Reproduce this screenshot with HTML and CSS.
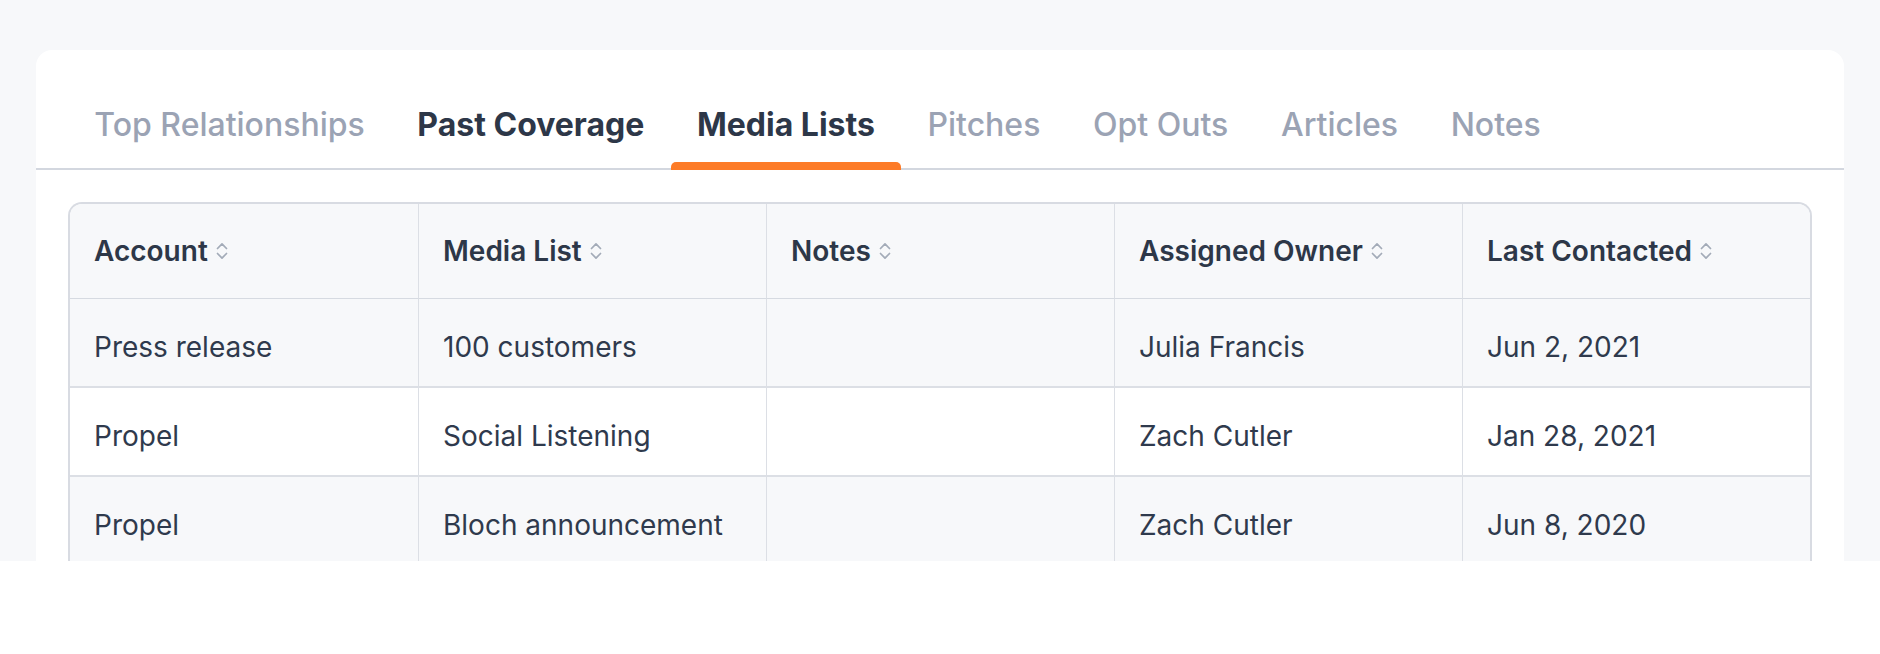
FILE: index.html
```html
<!DOCTYPE html>
<html lang="en">
<head>
<meta charset="utf-8">
<title>Media Lists</title>
<link rel="stylesheet" href="styles.css">
</head>
<body>
<div class="page">
  <div class="card">
    <nav class="tabs">
      <span class="tab">Top Relationships</span>
      <span class="tab tab-strong">Past Coverage</span>
      <span class="tab tab-strong tab-active">Media Lists</span>
      <span class="tab">Pitches</span>
      <span class="tab">Opt Outs</span>
      <span class="tab">Articles</span>
      <span class="tab">Notes</span>
    </nav>
    <div class="table-wrap">
      <table class="grid">
        <thead>
          <tr>
            <th><span class="th-inner">Account<svg class="sort" viewBox="0 0 12 18" width="12" height="18"><path d="M1.5 6.5 L6 1.8 L10.5 6.5 M1.5 11.5 L6 16.2 L10.5 11.5"/></svg></span></th>
            <th><span class="th-inner">Media List<svg class="sort" viewBox="0 0 12 18" width="12" height="18"><path d="M1.5 6.5 L6 1.8 L10.5 6.5 M1.5 11.5 L6 16.2 L10.5 11.5"/></svg></span></th>
            <th><span class="th-inner">Notes<svg class="sort" viewBox="0 0 12 18" width="12" height="18"><path d="M1.5 6.5 L6 1.8 L10.5 6.5 M1.5 11.5 L6 16.2 L10.5 11.5"/></svg></span></th>
            <th><span class="th-inner">Assigned Owner<svg class="sort" viewBox="0 0 12 18" width="12" height="18"><path d="M1.5 6.5 L6 1.8 L10.5 6.5 M1.5 11.5 L6 16.2 L10.5 11.5"/></svg></span></th>
            <th><span class="th-inner">Last Contacted<svg class="sort" viewBox="0 0 12 18" width="12" height="18"><path d="M1.5 6.5 L6 1.8 L10.5 6.5 M1.5 11.5 L6 16.2 L10.5 11.5"/></svg></span></th>
          </tr>
        </thead>
        <tbody>
          <tr class="odd">
            <td>Press release</td>
            <td>100 customers</td>
            <td></td>
            <td>Julia Francis</td>
            <td>Jun 2, 2021</td>
          </tr>
          <tr>
            <td>Propel</td>
            <td>Social Listening</td>
            <td></td>
            <td>Zach Cutler</td>
            <td>Jan 28, 2021</td>
          </tr>
          <tr class="odd">
            <td>Propel</td>
            <td>Bloch announcement</td>
            <td></td>
            <td>Zach Cutler</td>
            <td>Jun 8, 2020</td>
          </tr>
        </tbody>
      </table>
    </div>
  </div>
</div>
</body>
</html>
```

FILE: styles.css
```css
html, body {
  margin: 0;
  padding: 0;
  background: #ffffff;
}

body {
  font-family: Inter, "Noto Sans", "Liberation Sans", sans-serif;
  color: #2f3a4d;
}

.page {
  height: 561px;
  overflow: hidden;
  background: #f7f8fa;
  padding: 50px 36px 0;
  box-sizing: border-box;
}

.card {
  background: #ffffff;
  border-radius: 16px 16px 0 0;
  height: 700px;
}

.tabs {
  display: flex;
  padding: 55px 32px 0;
  border-bottom: 2px solid #d3d7df;
}

.tab {
  position: relative;
  padding: 0 26.3px 23px;
  font-size: 32px;
  line-height: 40px;
  font-weight: 500;
  color: #9ba3b4;
  white-space: nowrap;
}

.tab-strong {
  font-weight: 700;
  color: #2d3748;
}

.tab-active::after {
  content: "";
  position: absolute;
  left: 0;
  right: 0;
  bottom: -2px;
  height: 8px;
  background: #fd7b27;
  border-radius: 5px 5px 0 0;
}

.table-wrap {
  padding: 32px 32px 0;
}

.grid {
  width: 100%;
  table-layout: fixed;
  border-collapse: separate;
  border-spacing: 0;
  border: 2px solid #d8dbe2;
  border-bottom: 0;
  border-radius: 14px 14px 0 0;
  overflow: hidden;
  font-size: 28px;
  line-height: 34px;
}

.grid th,
.grid td {
  text-align: left;
  vertical-align: middle;
  padding: 0 24px;
  white-space: nowrap;
  overflow: hidden;
}

.grid th + th,
.grid td + td {
  border-left: 1px solid #dcdfe5;
}

.grid thead tr {
  background: #f7f8fa;
}

.grid th {
  height: 94px;
  font-weight: 600;
  color: #2d3748;
  border-bottom: 1px solid #d6dae1;
}

.grid td {
  height: 89px;
  padding-top: 8px;
  box-sizing: border-box;
  font-weight: 400;
  color: #2f3a4d;
  border-bottom: 2px solid #dcdfe5;
}

.grid tr.odd {
  background: #f7f8fa;
}

.th-inner {
  display: inline-flex;
  align-items: center;
}

.sort {
  margin-left: 8px;
  fill: none;
  stroke: #a3abb8;
  stroke-width: 1.7;
  stroke-linecap: round;
  stroke-linejoin: round;
}
```
